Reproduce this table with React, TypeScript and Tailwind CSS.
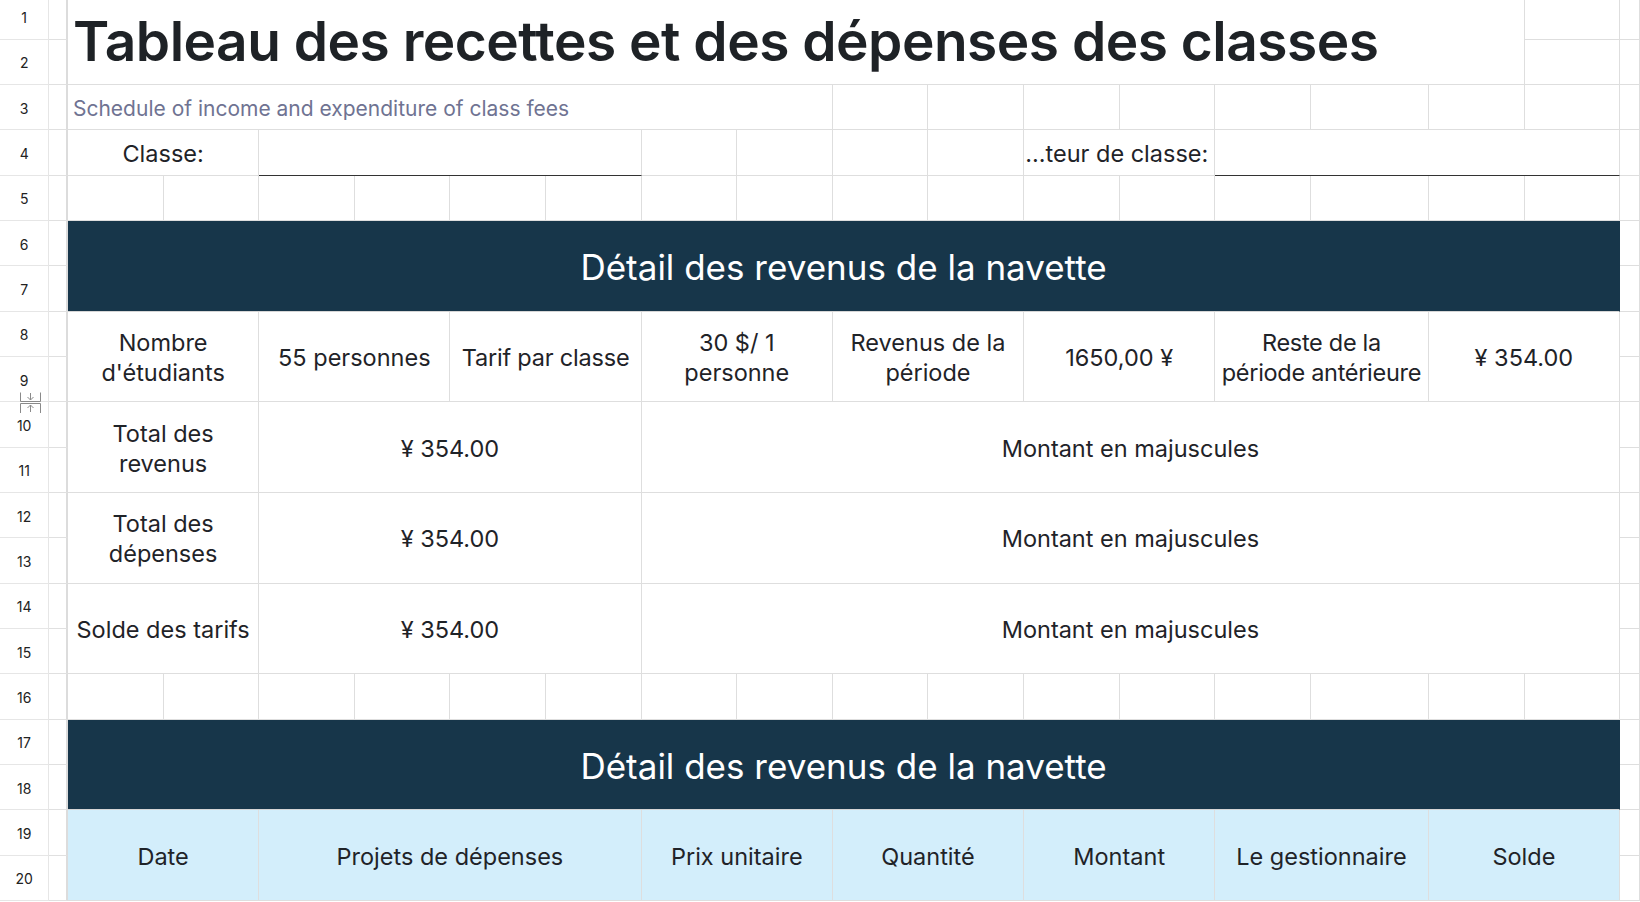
import React from "react";

type C = { cls: string; content?: React.ReactNode; kind?: string };

const BODY = "text-[23.5px] leading-[30px] text-[#1f2328] pt-[3px]";

export default function App() {
  const cells: C[] = [];
  const singles = (row: string, cols: string[]) => cols.forEach((c) => cells.push({ cls: `${c} ${row}` }));

  // rows 1-2
  cells.push({ cls: "col-[3/18] row-[1/3] justify-start pl-[5px]", kind: "title", content: "Tableau des recettes et des dépenses des classes" });
  cells.push({ cls: "col-[18/19] row-[1/2]" });
  cells.push({ cls: "col-[18/19] row-[2/3]" });
  cells.push({ cls: "col-[19/20] row-[1/2]" });
  cells.push({ cls: "col-[19/20] row-[2/3]" });

  // row 3
  cells.push({ cls: "col-[3/11] row-[3/4] justify-start pl-[5px]", kind: "sub", content: "Schedule of income and expenditure of class fees" });
  singles("row-[3/4]", ["col-[11/12]", "col-[12/13]", "col-[13/14]", "col-[14/15]", "col-[15/16]", "col-[16/17]", "col-[17/18]", "col-[18/19]", "col-[19/20]"]);

  // row 4
  cells.push({ cls: "col-[3/5] row-[4/5]", kind: "body", content: "Classe:" });
  cells.push({ cls: "col-[5/9] row-[4/5] !border-b-[1.5px] !border-b-[#333333]" });
  singles("row-[4/5]", ["col-[9/10]", "col-[10/11]", "col-[11/12]", "col-[12/13]"]);
  cells.push({ cls: "col-[13/15] row-[4/5] justify-end pr-[6px] whitespace-nowrap", kind: "body", content: "...teur de classe:" });
  cells.push({ cls: "col-[15/19] row-[4/5] !border-b-[1.5px] !border-b-[#333333]" });
  cells.push({ cls: "col-[19/20] row-[4/5]" });

  const allSingles = ["col-[3/4]", "col-[4/5]", "col-[5/6]", "col-[6/7]", "col-[7/8]", "col-[8/9]", "col-[9/10]", "col-[10/11]", "col-[11/12]", "col-[12/13]", "col-[13/14]", "col-[14/15]", "col-[15/16]", "col-[16/17]", "col-[17/18]", "col-[18/19]", "col-[19/20]"];
  // row 5
  singles("row-[5/6]", allSingles);

  // rows 6-7
  cells.push({ cls: "col-[3/19] row-[6/8]", kind: "head", content: "Détail des revenus de la navette" });
  cells.push({ cls: "col-[19/20] row-[6/7]" });
  cells.push({ cls: "col-[19/20] row-[7/8]" });

  // rows 8-9
  const r89: [string, React.ReactNode, string][] = [
    ["col-[3/5]", "Nombre d'étudiants", "px-[4px]"],
    ["col-[5/7]", "55 personnes", "px-[4px]"],
    ["col-[7/9]", "Tarif par classe", "px-[4px] tracking-[-0.2px]"],
    ["col-[9/11]", "30 $/ 1 personne", "px-[4px]"],
    ["col-[11/13]", "Revenus de la période", "px-[4px]"],
    ["col-[13/15]", "1650,00 ¥", "px-[4px]"],
    ["col-[15/17]", <>Reste de la<br />période antérieure</>, "px-0 tracking-[-0.3px] whitespace-nowrap"],
    ["col-[17/19]", "¥ 354.00", "px-[4px]"],
  ];
  r89.forEach(([c, t, x]) => cells.push({ cls: `${c} row-[8/10] ${x}`, kind: "body", content: t }));
  cells.push({ cls: "col-[19/20] row-[8/9]" });
  cells.push({ cls: "col-[19/20] row-[9/10]" });

  // rows 10-15
  const totals: [string, string, string, string][] = [
    ["row-[10/12]", "Total des revenus", "row-[10/11]", "row-[11/12]"],
    ["row-[12/14]", "Total des dépenses", "row-[12/13]", "row-[13/14]"],
    ["row-[14/16]", "Solde des tarifs", "row-[14/15]", "row-[15/16]"],
  ];
  totals.forEach(([r, label, ra, rb]) => {
    cells.push({ cls: `col-[3/5] ${r} px-[4px]`, kind: "body", content: label });
    cells.push({ cls: `col-[5/9] ${r}`, kind: "body", content: "¥ 354.00" });
    cells.push({ cls: `col-[9/19] ${r}`, kind: "body", content: "Montant en majuscules" });
    cells.push({ cls: `col-[19/20] ${ra}` });
    cells.push({ cls: `col-[19/20] ${rb}` });
  });

  // row 16
  singles("row-[16/17]", allSingles);

  // rows 17-18
  cells.push({ cls: "col-[3/19] row-[17/19]", kind: "head", content: "Détail des revenus de la navette" });
  cells.push({ cls: "col-[19/20] row-[17/18]" });
  cells.push({ cls: "col-[19/20] row-[18/19]" });

  // rows 19-20
  const r1920: [string, string][] = [
    ["col-[3/5]", "Date"],
    ["col-[5/9]", "Projets de dépenses"],
    ["col-[9/11]", "Prix unitaire"],
    ["col-[11/13]", "Quantité"],
    ["col-[13/15]", "Montant"],
    ["col-[15/17]", "Le gestionnaire"],
    ["col-[17/19]", "Solde"],
  ];
  r1920.forEach(([c, t]) => cells.push({ cls: `${c} row-[19/21]`, kind: "blue", content: t }));
  cells.push({ cls: "col-[19/20] row-[19/20]" });
  cells.push({ cls: "col-[19/20] row-[20/21]" });

  const rowHeadRows = [
    "row-[1/2]", "row-[2/3]", "row-[3/4]", "row-[4/5]", "row-[5/6]", "row-[6/7]", "row-[7/8]", "row-[8/9]", "row-[9/10]", "row-[10/11]",
    "row-[11/12]", "row-[12/13]", "row-[13/14]", "row-[14/15]", "row-[15/16]", "row-[16/17]", "row-[17/18]", "row-[18/19]", "row-[19/20]", "row-[20/21]",
  ];

  const kindCls = (k?: string) => {
    switch (k) {
      case "title":
        return "text-[55px] font-semibold tracking-[-0.5px] text-[#1e2226] leading-none whitespace-nowrap pt-[4px]";
      case "sub":
        return "text-[21px] text-[#6f7392] whitespace-nowrap pt-[3px]";
      case "head":
        return "bg-[#17364a] text-white text-[35px] pt-[3px] !border-[#17364a] !border-b-[#d6d6d6]";
      case "blue":
        return "bg-[#d3eefb] " + BODY;
      case "body":
        return BODY;
      default:
        return "";
    }
  };

  return (
    <div className="w-[1640px] h-[902px] overflow-hidden bg-white" style={{ fontFamily: "Inter, 'Noto Sans', sans-serif" }}>
      <div className="relative grid -mt-[5.7px] grid-cols-[49.3px_18.7px_repeat(12,95.62px)_96.2px_117.1px_96.1px_95.5px_1fr] grid-rows-[repeat(20,45.33px)]">
        {rowHeadRows.map((r, i) => (
          <React.Fragment key={r}>
            <div className={`col-[1/2] ${r} border-r border-b border-[#e6e6e6] flex items-center justify-center pt-[2px] text-[14px] text-[#222]`}>{i + 1}</div>
            <div className={`col-[2/3] ${r} border-r-2 border-b border-r-[#dcdcdc] border-b-[#e0e0e0]`} />
          </React.Fragment>
        ))}
        {cells.map((c, i) => (
          <div
            key={i}
            className={`border-r border-b border-[#dedede] flex items-center justify-center text-center overflow-hidden ${kindCls(c.kind)} ${c.cls}`}
          >
            {c.content}
          </div>
        ))}
        <svg className="absolute left-[19px] top-[397px]" width="23" height="23" viewBox="0 0 23 23" fill="none" stroke="#8a8a8a" strokeWidth="1">
          <path d="M1.5 1.5 V10.5 H21.5 V1.5" />
          <path d="M11.5 2 V9" />
          <path d="M8.5 6 L11.5 9 L14.5 6" />
          <path d="M1.5 22 V12.5 H21.5 V22" />
          <path d="M11.5 21 V14" />
          <path d="M8.5 17 L11.5 14 L14.5 17" />
        </svg>
      </div>
    </div>
  );
}
